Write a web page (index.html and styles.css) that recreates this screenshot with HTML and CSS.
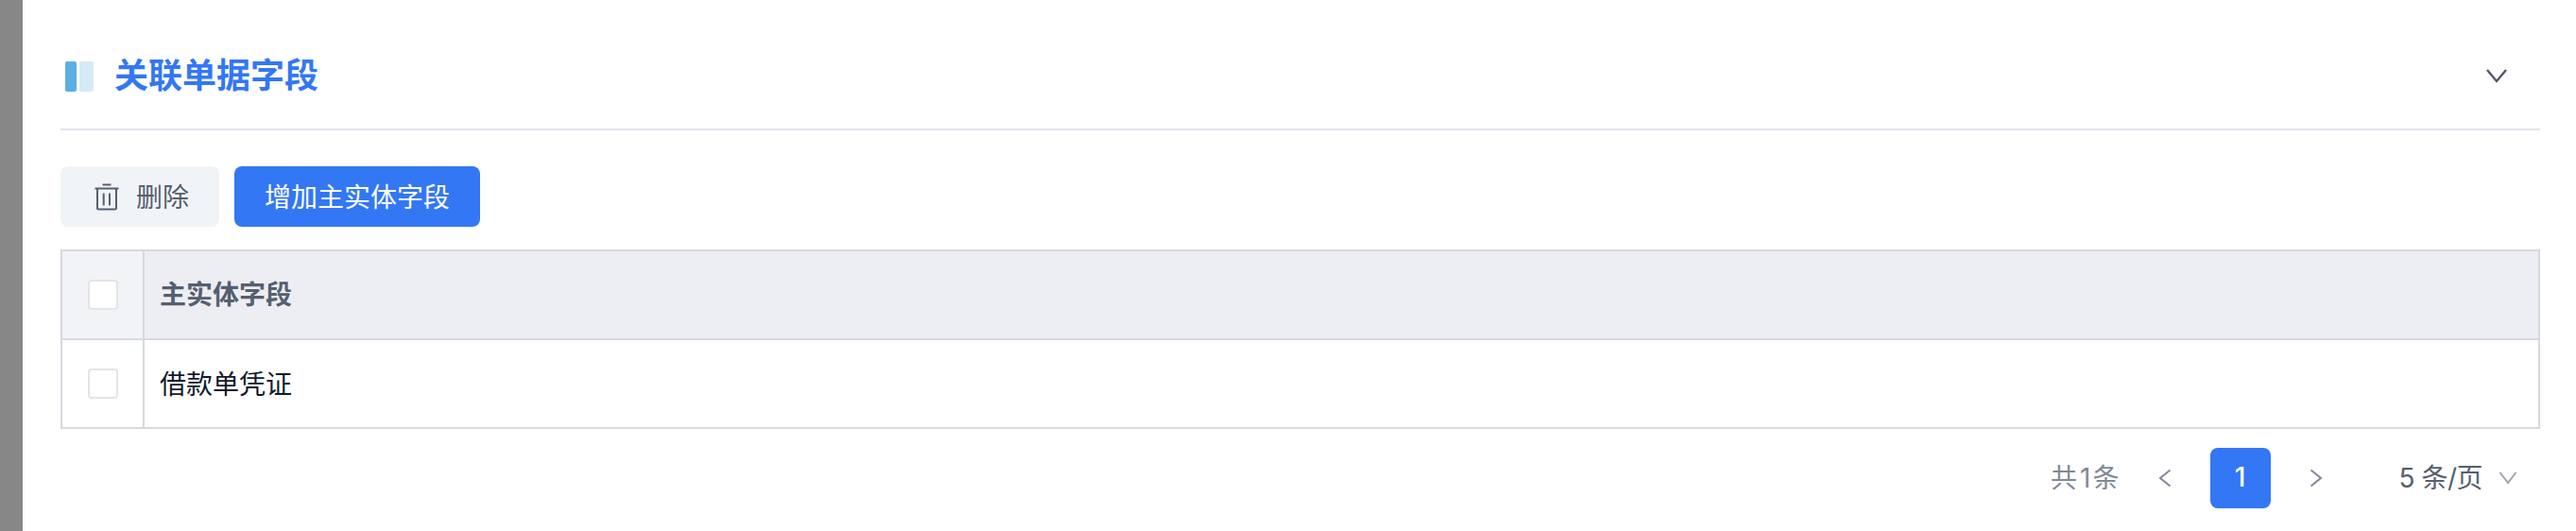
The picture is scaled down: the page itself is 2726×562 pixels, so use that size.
FILE: index.html
```html
<!DOCTYPE html>
<html lang="zh-CN">

<head>
    <meta charset="UTF-8">
    <meta name="viewport" content="width=device-width, initial-scale=1.0">
    <title>关联单据字段</title>
    <link rel="stylesheet" href="styles.css">
</head>

<body>
    <div class="mask"></div>
    <main class="panel">
        <header class="panel-header">
            <span class="title-mark" aria-hidden="true"></span>
            <h1 class="panel-title">关联单据字段</h1>
            <button class="collapse-btn" aria-label="收起">
                <svg width="24" height="16" viewBox="0 0 24 16"><path d="M2 2 12 14 22 2" /></svg>
            </button>
        </header>

        <div class="toolbar">
            <button class="btn btn-default">
                <svg class="icon-trash" width="26" height="30" viewBox="0 0 26 30">
                    <path d="M8.5 2.5h9M.5 6.5h25M3 6.5V27q0 1.5 1.5 1.5h17q1.5 0 1.5-1.5V6.5M9.7 11.5v13M16 11.5v13" />
                </svg>
                <span>删除</span>
            </button>
            <button class="btn btn-primary">增加主实体字段</button>
        </div>

        <table class="table">
            <thead>
                <tr>
                    <th class="check-cell"><input type="checkbox" class="checkbox" aria-label="全选"></th>
                    <th>主实体字段</th>
                </tr>
            </thead>
            <tbody>
                <tr>
                    <td class="check-cell"><input type="checkbox" class="checkbox" aria-label="选择"></td>
                    <td>借款单凭证</td>
                </tr>
            </tbody>
        </table>

        <nav class="pagination" aria-label="分页">
            <span class="total">共<span class="total-num">1</span>条</span>
            <button class="page-arrow" aria-label="上一页">
                <svg width="14" height="20" viewBox="0 0 14 20"><path d="M12.5 1.5 2 10l10.5 8.5" /></svg>
            </button>
            <button class="page-num">1</button>
            <button class="page-arrow" aria-label="下一页">
                <svg width="14" height="20" viewBox="0 0 14 20"><path d="M1.5 1.5 12 10 1.5 18.5" /></svg>
            </button>
            <button class="page-size">
                <span>5 条/页</span>
                <svg width="20" height="14" viewBox="0 0 20 14"><path d="M1.5 1 10 12l8.5-11" /></svg>
            </button>
        </nav>
    </main>
</body>

</html>
```
FILE: styles.css
```css
* {
    margin: 0;
    padding: 0;
    box-sizing: border-box;
}

body {
    display: flex;
    height: 562px;
    overflow: hidden;
    background-color: #fff;
    color: #111a2c;
    font-family: Inter, "Noto Sans CJK SC", sans-serif;
    font-size: 28px;
}

button {
    border: none;
    background: none;
    color: inherit;
    font: inherit;
    cursor: pointer;
}

svg {
    display: block;
    flex: none;
    fill: none;
    stroke: currentColor;
    stroke-width: 2;
}

.mask {
    width: 24px;
    background-color: #878787;
}

.panel {
    flex: 1;
    padding: 24px 38px 0 40px;
}

/* Título */
.panel-header {
    display: flex;
    align-items: center;
    height: 114px;
    padding: 0 34px 0 5px;
    border-bottom: 2px solid #e4e4ec;
}

.title-mark {
    display: flex;
    gap: 3px;
}

.title-mark::before,
.title-mark::after {
    content: "";
    height: 32px;
    margin-top: 2px;
    border-radius: 2px;
}

.title-mark::before {
    width: 12px;
    background-color: #5aafe3;
}

.title-mark::after {
    width: 15px;
    background-color: #d5ebf8;
}

.panel-title {
    margin-left: 22px;
    color: #3377f5;
    font-size: 36px;
    font-weight: bold;
    line-height: 54px;
}

.collapse-btn {
    margin-left: auto;
    color: #505766;
}

.collapse-btn svg {
    stroke-width: 2.4;
}

/* Botões */
.toolbar {
    display: flex;
    gap: 16px;
    padding: 38px 0 24px;
}

.btn {
    display: flex;
    align-items: center;
    height: 64px;
    border-radius: 8px;
}

.btn-default {
    gap: 18px;
    width: 168px;
    padding-left: 36px;
    background-color: #f1f4f7;
    color: #555f70;
}

.btn-default span {
    padding-bottom: 3px;
}

.btn-primary {
    padding: 0 32px 3px;
    background-color: #3377f5;
    color: #fff;
}

/* Tabela */
.table {
    width: 100%;
    table-layout: fixed;
    border-collapse: collapse;
    border: 2px solid #d5d8df;
}

.table th,
.table td {
    height: 94px;
    padding: 0 16px 2px;
    border: 2px solid #d5d8df;
    text-align: left;
    vertical-align: middle;
}

.table th {
    padding-bottom: 4px;
    background-color: #edeef2;
    color: #555f70;
    font-weight: bold;
}

.table .check-cell {
    width: 87px;
    padding: 0 0 0 27px;
}

.table th.check-cell {
    background-color: #f1f3f7;
}

.checkbox {
    display: block;
    appearance: none;
    width: 32px;
    height: 32px;
    border: 2px solid #e4e4ea;
    border-radius: 4px;
    background-color: #fff;
}

/* Paginação */
.pagination {
    display: flex;
    align-items: center;
    justify-content: flex-end;
    height: 64px;
    margin-top: 20px;
    padding-right: 24px;
    color: #808895;
}

.total {
    padding-bottom: 4px;
}

.total-num {
    margin: 0 2px 0 3px;
}

.page-arrow {
    margin: 0 41px;
}

.page-num {
    width: 64px;
    height: 64px;
    padding-bottom: 3px;
    border-radius: 8px;
    background-color: #3377f5;
    color: #fff;
    font-weight: 500;
}

.page-size {
    display: flex;
    align-items: center;
    gap: 17px;
    margin-left: 40px;
    color: #555f70;
    letter-spacing: -0.5px;
}

.page-size span {
    padding-bottom: 4px;
}

.page-size svg {
    color: #a0a6b2;
}
```
